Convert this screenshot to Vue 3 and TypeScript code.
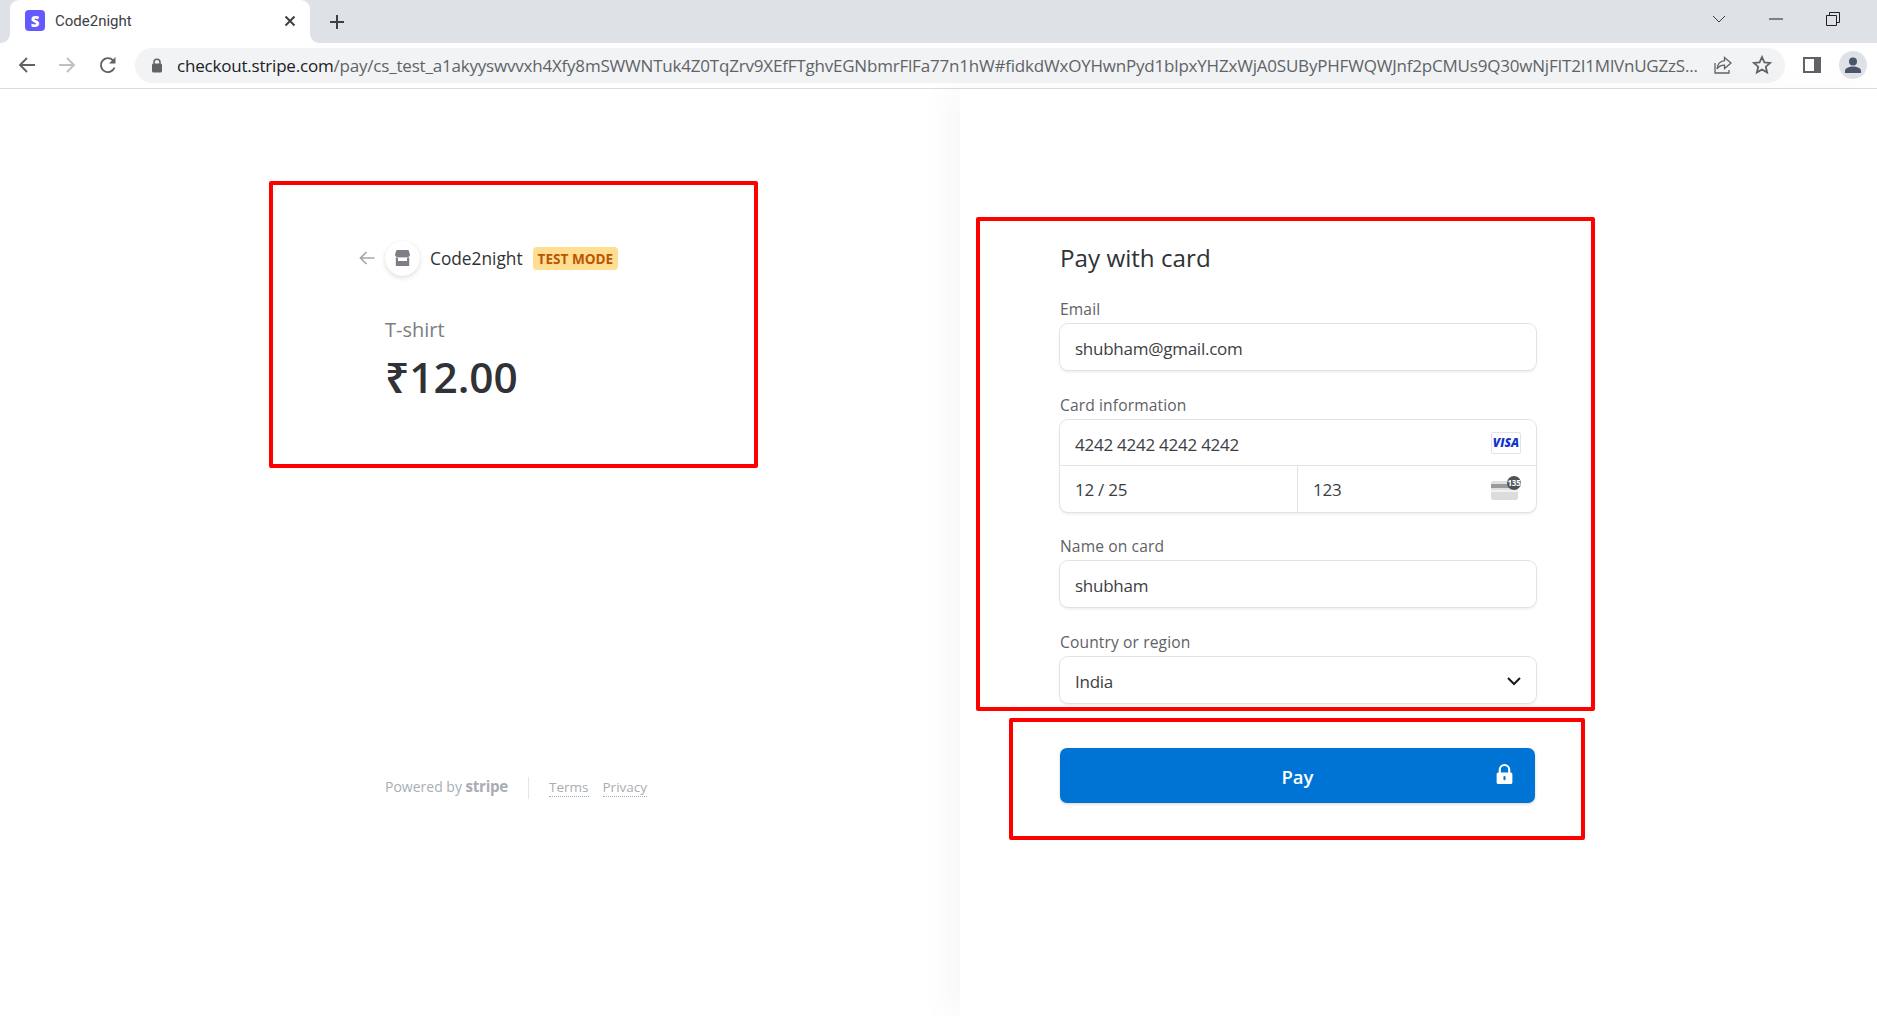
<script setup lang="ts">
const urlPath = 'pay/cs_test_a1akyyswvvxh4Xfy8mSWWNTuk4Z0TqZrv9XEfFTghvEGNbmrFlFa77n1hW#fidkdWxOYHwnPyd1blpxYHZxWjA0SUByPHFWQWJnf2pCMUs9Q30wNjFIT2I1MlVnUGZzS...'
</script>

<template>
  <div class="page">
    <header class="tabstrip">
      <div class="tab">
        <span class="favicon">S</span>
        <span class="tab-title">Code2night</span>
        <svg class="tab-close" width="12" height="12" viewBox="0 0 12 12"><path d="M1.5 1.5l9 9M10.5 1.5l-9 9" stroke="#3c4043" stroke-width="2" fill="none" /></svg>
      </div>
      <svg class="new-tab" width="16" height="16" viewBox="0 0 16 16"><path d="M8 1v14M1 8h14" stroke="#3c4043" stroke-width="2" fill="none" /></svg>
      <div class="win-controls">
        <svg width="14" height="8" viewBox="0 0 14 8"><path d="M1 1l6 6 6-6" stroke="#3c4043" fill="none" /></svg>
        <svg width="14" height="2" viewBox="0 0 14 2"><path d="M0 1h14" stroke="#202124" fill="none" /></svg>
        <svg width="14" height="14" viewBox="0 0 14 14"><path d="M.5 3.5h10v10H.5zM3.5 3.5v-3h10v10h-3" stroke="#202124" fill="none" /></svg>
      </div>
    </header>

    <nav class="toolbar">
      <svg class="tool-icon" width="20" height="20" viewBox="0 0 20 20"><path d="M18 10H3M10 3l-7 7 7 7" stroke="#5f6368" stroke-width="1.9" fill="none" /></svg>
      <svg class="tool-icon tool-forward" width="20" height="20" viewBox="0 0 20 20"><path d="M2 10h15M10 3l7 7-7 7" stroke="#bdc1c6" stroke-width="1.9" fill="none" /></svg>
      <svg class="tool-icon tool-reload" width="20" height="20" viewBox="0 0 20 20"><path d="M16.5 12.5A7 7 0 1 1 15 5.3" stroke="#5f6368" stroke-width="1.9" fill="none" /><path d="M17.5 2v6.5H11z" fill="#5f6368" /></svg>
      <div class="omnibox">
        <svg class="omni-lock" width="12" height="15" viewBox="0 0 12 15"><path d="M3 6V4.2a3 3 0 0 1 6 0V6" stroke="#5f6368" stroke-width="1.5" fill="none" /><rect x="1" y="5.5" width="10" height="9" rx="1.5" fill="#5f6368" /></svg>
        <span class="url"><span class="url-host">checkout.stripe.com</span>/{{ urlPath }}</span>
        <svg class="omni-icon" width="20" height="20" viewBox="0 0 20 20"><path d="M11.5 2.5l6.5 5.5-6.5 5.5V10.2C8 10.2 5.6 11.5 4 14c.4-4.500 3-7.700 7.500-8.300zM2 8v10h14v-3" stroke="#5f6368" stroke-width="1.3" fill="none" /></svg>
        <svg class="omni-icon" width="20" height="20" viewBox="0 0 20 20"><path d="M10 2l2.400 5.300 5.700.6-4.300 3.800 1.300 5.700L10 14.500l-5.100 2.900 1.300-5.700L1.900 7.900l5.700-.6z" stroke="#5f6368" stroke-width="1.800" fill="none" /></svg>
      </div>
      <svg class="panel-icon" width="18" height="16" viewBox="0 0 18 16"><rect width="18" height="16" fill="#5f6368" /><rect x="2" y="2" width="9" height="12" fill="#fff" /></svg>
      <span class="avatar">
        <svg width="18" height="18" viewBox="0 0 18 18"><circle cx="9" cy="5.500" r="4" fill="#4a5568" /><path d="M1 17v-2c0-3 4-4.500 8-4.500s8 1.500 8 4.500v2z" fill="#4a5568" /></svg>
      </span>
    </nav>

    <main class="checkout">
      <section class="summary">
        <div class="merchant">
          <svg class="back" width="16" height="14" viewBox="0 0 16 14"><path d="M15.500 7H1.500M7.500 1l-6 6 6 6" stroke="#a3a7ad" stroke-width="1.700" fill="none" /></svg>
          <span class="store">
            <svg width="15" height="16" viewBox="0 0 15 16"><path d="M1.500 0h12L15 4.500c0 1.400-1 2.400-2 2.400H2C1 6.900 0 5.900 0 4.500z" fill="#7c8086" /><path d="M.8 7.500h13.400V16H.8z" fill="#7c8086" /><path d="M3 7.800h9V11H3z" fill="#fff" /></svg>
          </span>
          <span class="merchant-name">Code2night</span>
          <span class="badge">TEST MODE</span>
        </div>
        <p class="product">T-shirt</p>
        <p class="price">₹12.00</p>
        <footer class="legal">
          <span>Powered by <b class="stripe">stripe</b></span>
          <i class="legal-sep"></i>
          <a class="legal-link">Terms</a>
          <a class="legal-link">Privacy</a>
        </footer>
      </section>

      <section class="pay">
        <h1 class="pay-title">Pay with card</h1>

        <label class="field-label first">Email</label>
        <div class="control">shubham@gmail.com</div>

        <label class="field-label">Card information</label>
        <div class="card-box">
          <div class="card-row card-number">
            <span>4242 4242 4242 4242</span>
            <span class="visa">VISA</span>
          </div>
          <div class="card-split">
            <div class="card-row card-exp">12 / 25</div>
            <div class="card-row card-cvc">
              <span>123</span>
              <span class="cvc">
                <span class="cvc-card"></span>
                <span class="cvc-num">135</span>
              </span>
            </div>
          </div>
        </div>

        <label class="field-label name">Name on card</label>
        <div class="control">shubham</div>

        <label class="field-label">Country or region</label>
        <div class="control select">
          <span>India</span>
          <svg width="14" height="9" viewBox="0 0 14 9"><path d="M1 1l6 6 6-6" stroke="#1a1a1a" stroke-width="2" fill="none" /></svg>
        </div>

        <button class="pay-btn" type="button">
          <span>Pay</span>
          <svg class="pay-lock" width="17" height="21" viewBox="0 0 16 20"><path d="M3.500 9V5.500a4.500 4.500 0 0 1 9 0V9" stroke="#fff" stroke-width="2" fill="none" /><path d="M2 8h12a1.500 1.500 0 0 1 1.500 1.500v8A1.500 1.500 0 0 1 14 19H2a1.500 1.500 0 0 1-1.500-1.500v-8A1.500 1.500 0 0 1 2 8z" fill="#fff" /><rect x="7" y="11.500" width="2" height="4" rx="1" fill="#0074d4" /></svg>
        </button>
      </section>
    </main>

    <div class="mark mark-summary"></div>
    <div class="mark mark-form"></div>
    <div class="mark mark-pay"></div>
  </div>
</template>

<style scoped>
.page {
  position: relative;
  width: 1877px;
  height: 1016px;
  overflow: hidden;
  background: #fff;
  font-family: "Open Sans", "Noto Sans", sans-serif;
  color: #1a1a1a;
}

/* browser chrome */
.tabstrip {
  display: flex;
  align-items: center;
  height: 43px;
  padding-left: 10px;
  background: #dee1e6;
  font-family: Roboto, "Open Sans", sans-serif;
}
.tab {
  position: relative;
  display: flex;
  align-items: center;
  align-self: stretch;
  width: 300px;
  padding: 0 14px 2px 15px;
  box-sizing: border-box;
  background: #fff;
  border-radius: 9px 9px 0 0;
}
.tab::before,
.tab::after {
  content: "";
  position: absolute;
  bottom: 0;
  width: 9px;
  height: 9px;
}
.tab::before {
  left: -9px;
  background: radial-gradient(circle at 0 0, transparent 8.5px, #fff 9px);
}
.tab::after {
  right: -9px;
  background: radial-gradient(circle at 100% 0, transparent 8.5px, #fff 9px);
}
.favicon {
  display: flex;
  align-items: center;
  justify-content: center;
  width: 20px;
  height: 21px;
  border-radius: 4px;
  background: #635bff;
  color: #fff;
  font: 800 15px "Open Sans", sans-serif;
}
.tab-title {
  flex: 1;
  margin-left: 10px;
  font-size: 15px;
  color: #3c4043;
}
.new-tab {
  margin-left: 19px;
}
.win-controls {
  display: flex;
  align-items: center;
  gap: 43px;
  margin-left: auto;
  padding-right: 37px;
  margin-top: -5px;
}
.toolbar {
  display: flex;
  align-items: center;
  height: 44px;
  padding: 0 10px 1px 17px;
  border-bottom: 1px solid #dadce0;
  background: #fff;
}
.tool-icon {
  margin-right: 20px;
}
.tool-forward {
  margin-right: 21px;
}
.tool-reload {
  margin-right: 17px;
}
.omnibox {
  display: flex;
  align-items: center;
  flex: none;
  width: 1650px;
  height: 35px;
  box-sizing: border-box;
  padding: 0 13px 0 16px;
  border-radius: 18px;
  background: #f1f3f4;
}
.omni-lock {
  flex: none;
}
.url {
  flex: none;
  width: 1522px;
  margin-left: 14px;
  overflow: hidden;
  white-space: nowrap;
  font-size: 17px;
  letter-spacing: -0.2px;
  color: #5f6368;
}
.url-host {
  color: #202124;
}
.omni-icon {
  flex: none;
  margin-left: 14px;
}
.omni-icon + .omni-icon {
  margin-left: 19px;
}
.panel-icon {
  flex: none;
  margin-left: 18px;
}
.avatar {
  display: flex;
  align-items: flex-end;
  justify-content: center;
  flex: none;
  width: 28px;
  height: 28px;
  margin-left: 18px;
  padding-bottom: 5px;
  box-sizing: border-box;
  border-radius: 50%;
  background: #dee1e6;
}

/* checkout */
.checkout {
  display: flex;
  height: 927px;
}
.summary {
  display: flex;
  flex-direction: column;
  width: 960px;
  box-sizing: border-box;
  padding: 151px 0 0 385px;
}
.merchant {
  display: flex;
  align-items: center;
  height: 36px;
  margin-left: -26px;
}
.back {
  margin-right: 10px;
}
.store {
  display: flex;
  align-items: center;
  justify-content: center;
  width: 35px;
  height: 35px;
  border-radius: 50%;
  background: #fff;
  box-shadow: 0 2px 5px rgba(0, 0, 0, 0.12), 0 0 1px rgba(0, 0, 0, 0.08);
}
.merchant-name {
  margin-left: 10px;
  font-size: 17.300px;
  color: #303236;
}
.badge {
  margin-left: 10px;
  padding: 0 5px;
  height: 23px;
  line-height: 23px;
  border-radius: 4px;
  background: #ffde92;
  color: #bb5504;
  font-size: 13.600px;
  font-weight: 700;
}
.product {
  margin: 40px 0 0;
  font-size: 20px;
  line-height: 28px;
  font-weight: 500;
  color: #7b7c80;
}
.price {
  margin: 6px 0 0;
  font-size: 42.400px;
  line-height: 54px;
  font-weight: 600;
  color: #303236;
}
.legal {
  display: flex;
  align-items: baseline;
  margin-top: 372px;
  font-size: 14px;
  height: 24px;
  color: #a9adb3;
}
.stripe {
  font-size: 15.200px;
  letter-spacing: -0.3px;
}
.legal-sep {
  align-self: center;
  width: 1px;
  height: 22px;
  margin: 0 20px;
  background: #e6e6e6;
}
.legal-link {
  margin-right: 14px;
  font-size: 13.500px;
  border-bottom: 1px dotted #a9adb3;
  line-height: 18px;
}
.pay {
  flex: 1;
  padding: 151px 0 0 100px;
  box-sizing: border-box;
  background: #fff;
  box-shadow: -15px 0 30px rgba(0, 0, 0, 0.03);
}
.pay-title {
  width: 476px;
  margin: 0;
  height: 36px;
  line-height: 36px;
  font-size: 24.200px;
  font-weight: 500;
  color: #303236;
}
.field-label {
  display: block;
  width: 476px;
  height: 20px;
  margin-top: 25px;
  margin-bottom: 5px;
  line-height: 20px;
  font-size: 15.600px;
  letter-spacing: 0.12px;
  color: #5f6166;
}
.field-label.first {
  margin-top: 23px;
}
.field-label.name {
  margin-top: 24px;
}
.control,
.card-box {
  width: 476px;
  box-sizing: border-box;
  border-radius: 8px;
  background: #fff;
  box-shadow: 0 0 0 1px #e3e3e5, 0 2px 3px rgba(0, 0, 0, 0.09);
  font-size: 17px;
  letter-spacing: -0.25px;
  color: #3c3e43;
}
.control {
  display: flex;
  align-items: center;
  justify-content: space-between;
  height: 46px;
  padding: 2px 15px 0;
}
.card-row {
  display: flex;
  align-items: center;
  justify-content: space-between;
  height: 46px;
  box-sizing: border-box;
  padding: 1px 15px 0;
}
.card-number {
  padding-top: 3px;
  border-bottom: 1px solid #e3e3e5;
}
.card-split {
  display: flex;
}
.card-exp {
  width: 238px;
  border-right: 1px solid #e3e3e5;
}
.card-cvc {
  flex: 1;
}
.visa {
  display: flex;
  align-items: center;
  justify-content: center;
  width: 30px;
  height: 22px;
  margin-top: -3px;
  border: 1px solid #e3e3e5;
  border-radius: 2px;
  box-sizing: border-box;
  color: #1434cb;
  letter-spacing: 0;
  font: italic 800 12px "Open Sans", sans-serif;
}
.cvc {
  position: relative;
  width: 30px;
  height: 24px;
  margin-top: -4px;
}
.cvc-card {
  position: absolute;
  left: 0;
  bottom: 0;
  width: 27px;
  height: 19px;
  border-radius: 2px;
  background: linear-gradient(#e0e0e0 0 3px, #9a9a9a 3px 7px, #e0e0e0 7px 9px, #f2f2f2 9px 11px, #dcdcdc 11px);
}
.cvc-num {
  position: absolute;
  right: 0;
  top: 0;
  width: 14px;
  height: 14px;
  line-height: 14px;
  border-radius: 50%;
  background: #4f5257;
  color: #fff;
  text-align: center;
  font-size: 8px;
  letter-spacing: -0.3px;
  font-weight: 700;
}
.pay-btn {
  position: relative;
  display: flex;
  align-items: center;
  justify-content: center;
  width: 475px;
  height: 55px;
  margin-top: 45px;
  border: 0;
  padding: 2px 0 0;
  border-radius: 7px;
  background: #0074d4;
  box-shadow: 0 1px 3px rgba(0, 0, 0, 0.18);
  color: #fff;
  font: 600 18.500px "Open Sans", sans-serif;
}
.pay-lock {
  position: absolute;
  right: 22px;
  top: 16px;
}

/* red annotation boxes drawn over the screenshot */
.mark {
  position: absolute;
  box-sizing: border-box;
  border: 4px solid #f00;
  border-radius: 2px;
}
.mark-summary {
  left: 269px;
  top: 181px;
  width: 489px;
  height: 287px;
}
.mark-form {
  left: 976px;
  top: 217px;
  width: 619px;
  height: 494px;
}
.mark-pay {
  left: 1009px;
  top: 718px;
  width: 576px;
  height: 122px;
}
</style>
